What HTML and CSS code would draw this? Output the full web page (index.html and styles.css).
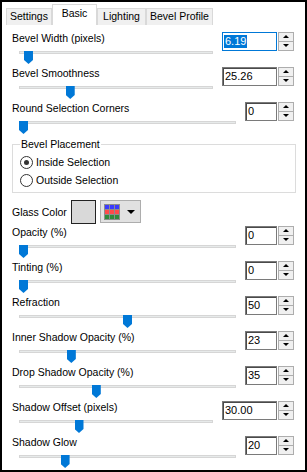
FILE: index.html
```html
<!DOCTYPE html>
<html>
<head>
<meta charset="UTF-8">
<title>Glass Bevel</title>
<link rel="stylesheet" href="styles.css">
</head>
<body>
<div class="frame">
	<div class="tabs">
		<span class="tab tab-settings">Settings</span>
		<span class="tab tab-basic active">Basic</span>
		<span class="tab tab-lighting">Lighting</span>
		<span class="tab tab-profile">Bevel Profile</span>
	</div>

	<div class="page">
		<div class="row">
			<div class="control">
				<div class="label">Bevel Width (pixels)</div>
				<div class="slider" style="--v:0.027"><div class="track"></div><span class="thumb"></span></div>
			</div>
			<div class="spin wide focus">
				<div class="field"><span class="sel">6.19</span></div>
				<div class="arrows"><span class="up"></span><span class="down"></span></div>
			</div>
		</div>

		<div class="row">
			<div class="control">
				<div class="label">Bevel Smoothness</div>
				<div class="slider" style="--v:0.2526"><div class="track"></div><span class="thumb"></span></div>
			</div>
			<div class="spin wide">
				<div class="field">25.26</div>
				<div class="arrows"><span class="up"></span><span class="down"></span></div>
			</div>
		</div>

		<div class="row">
			<div class="control">
				<div class="label">Round Selection Corners</div>
				<div class="slider" style="--v:0"><div class="track"></div><span class="thumb"></span></div>
			</div>
			<div class="spin">
				<div class="field">0</div>
				<div class="arrows"><span class="up"></span><span class="down"></span></div>
			</div>
		</div>

		<fieldset class="group">
			<legend>Bevel Placement</legend>
			<div class="radio"><span class="dot on"></span>Inside Selection</div>
			<div class="radio"><span class="dot"></span>Outside Selection</div>
		</fieldset>

		<div class="glass">
			<span>Glass Color</span>
			<span class="swatch"></span>
			<span class="picker">
				<svg width="16" height="16" viewBox="0 0 16 16">
					<rect x="0" y="0" width="16" height="16" fill="#8c8c8c"/>
					<rect x="1" y="1" width="4" height="4" fill="#3a3aff"/>
					<rect x="6" y="1" width="4" height="4" fill="#3a3aff"/>
					<rect x="11" y="1" width="4" height="4" fill="#3a3aff"/>
					<rect x="1" y="6" width="4" height="4" fill="#ff4a4a"/>
					<rect x="6" y="6" width="4" height="4" fill="#ff4a4a"/>
					<rect x="11" y="6" width="4" height="4" fill="#ff4a4a"/>
					<rect x="1" y="11" width="4" height="4" fill="#2e8b3a"/>
					<rect x="6" y="11" width="4" height="4" fill="#2e8b3a"/>
					<rect x="11" y="11" width="4" height="4" fill="#2e8b3a"/>
				</svg>
				<span class="caret"></span>
			</span>
		</div>

		<div class="row">
			<div class="control">
				<div class="label">Opacity (%)</div>
				<div class="slider" style="--v:0"><div class="track"></div><span class="thumb"></span></div>
			</div>
			<div class="spin">
				<div class="field">0</div>
				<div class="arrows"><span class="up"></span><span class="down"></span></div>
			</div>
		</div>

		<div class="row">
			<div class="control">
				<div class="label">Tinting (%)</div>
				<div class="slider" style="--v:0"><div class="track"></div><span class="thumb"></span></div>
			</div>
			<div class="spin">
				<div class="field">0</div>
				<div class="arrows"><span class="up"></span><span class="down"></span></div>
			</div>
		</div>

		<div class="row">
			<div class="control">
				<div class="label">Refraction</div>
				<div class="slider" style="--v:0.50"><div class="track"></div><span class="thumb"></span></div>
			</div>
			<div class="spin">
				<div class="field">50</div>
				<div class="arrows"><span class="up"></span><span class="down"></span></div>
			</div>
		</div>

		<div class="row">
			<div class="control">
				<div class="label">Inner Shadow Opacity (%)</div>
				<div class="slider" style="--v:0.23"><div class="track"></div><span class="thumb"></span></div>
			</div>
			<div class="spin">
				<div class="field">23</div>
				<div class="arrows"><span class="up"></span><span class="down"></span></div>
			</div>
		</div>

		<div class="row">
			<div class="control">
				<div class="label">Drop Shadow Opacity (%)</div>
				<div class="slider" style="--v:0.35"><div class="track"></div><span class="thumb"></span></div>
			</div>
			<div class="spin">
				<div class="field">35</div>
				<div class="arrows"><span class="up"></span><span class="down"></span></div>
			</div>
		</div>

		<div class="row">
			<div class="control">
				<div class="label">Shadow Offset (pixels)</div>
				<div class="slider" style="--v:0.30"><div class="track"></div><span class="thumb"></span></div>
			</div>
			<div class="spin wide">
				<div class="field">30.00</div>
				<div class="arrows"><span class="up"></span><span class="down"></span></div>
			</div>
		</div>

		<div class="row last">
			<div class="control">
				<div class="label">Shadow Glow</div>
				<div class="slider" style="--v:0.20"><div class="track"></div><span class="thumb"></span></div>
			</div>
			<div class="spin">
				<div class="field">20</div>
				<div class="arrows"><span class="up"></span><span class="down"></span></div>
			</div>
		</div>
	</div>
</div>
</body>
</html>
```

FILE: styles.css
```css
* {
	margin: 0;
	padding: 0;
	box-sizing: border-box;
}

body {
	font-family: "Liberation Sans", Arial, sans-serif;
	font-size: 10.5px;
	color: #000;
	background: #fff;
}

.frame {
	width: 307px;
	height: 472px;
	border: 2px solid #000;
	background: #fff;
	overflow: hidden;
}

/* tab strip */
.tabs {
	display: flex;
	align-items: flex-end;
	height: 23px;
	padding-left: 4px;
}

.tab {
	height: 17px;
	border: 1px solid #d9d9d9;
	border-bottom: none;
	background: #f0f0f0;
	line-height: 14px;
	text-align: center;
	white-space: nowrap;
}

.tab-settings { width: 46px; }
.tab-basic { width: 45px; }
.tab-lighting { width: 49px; }
.tab-profile { width: 67px; }

.tab.active {
	height: 21px;
	background: #fff;
	line-height: 16px;
}

.page {
	padding: 7px 11px 0 10px;
}

/* slider rows */
.row {
	display: flex;
	align-items: flex-start;
	height: 35px;
}

.row.last {
	height: 34px;
}

.control {
	flex: 1;
	margin-right: 9px;
}

.label {
	height: 13px;
	line-height: 13px;
	white-space: nowrap;
}

.slider {
	position: relative;
	height: 14px;
	margin: 1px 0 0 7px;
}

.track {
	height: 3px;
	margin-top: 6px;
	background: #e7eaea;
	border: 1px solid #d6d6d6;
}

.thumb {
	position: absolute;
	top: 0;
	left: calc(var(--v) * (100% - 9px));
	width: 9px;
	height: 13px;
	background: #0078d7;
	clip-path: polygon(0 0, 100% 0, 100% 70%, 50% 100%, 0 70%);
}

/* spin boxes */
.spin {
	display: flex;
	height: 19px;
}

.field {
	width: 32px;
	height: 19px;
	border: 1px solid #7a7a7a;
	box-shadow: inset 1px 1px 0 #4a4a4a;
	padding: 2px 0 0 2px;
	line-height: 13px;
	font-size: 11px;
	background: #fff;
	white-space: nowrap;
}

.spin.wide .field {
	width: 55px;
}

.focus .field {
	border-color: #0078d7;
	box-shadow: none;
	padding-left: 1px;
}

.sel {
	display: inline-block;
	padding: 0 1px;
	background: #0078d7;
	color: #fff;
}

.arrows {
	display: flex;
	flex-direction: column;
	width: 16px;
	margin-left: 1px;
}

.arrows span {
	position: relative;
	flex: 1;
	border: 1px solid #adadad;
	background: #f0f0f0;
}

.arrows .down {
	border-top: none;
}

.arrows span::after {
	content: "";
	position: absolute;
	left: 4px;
	top: 2px;
	border-left: 3px solid transparent;
	border-right: 3px solid transparent;
}

.arrows .up::after {
	border-bottom: 3px solid #000;
}

.arrows .down::after {
	top: 2px;
	border-top: 3px solid #000;
}

/* group box */
.group {
	margin: 1px -2px 0 0;
	border: 1px solid #dcdcdc;
	padding: 2px 0 3px 7px;
}

.group legend {
	padding: 0 1px;
	line-height: 13px;
}

.radio {
	display: flex;
	align-items: center;
	height: 18px;
}

.dot {
	position: relative;
	width: 13px;
	height: 13px;
	margin-right: 3px;
	border: 1px solid #333;
	border-radius: 50%;
	background: #fff;
}

.dot.on::after {
	content: "";
	position: absolute;
	left: 3px;
	top: 3px;
	width: 5px;
	height: 5px;
	border-radius: 50%;
	background: #333;
}

/* glass colour */
.glass {
	display: flex;
	align-items: center;
	height: 24px;
	margin: 7px 0 2px;
}

.swatch {
	width: 25px;
	height: 24px;
	margin-left: 4px;
	border: 1px solid #222;
	background: #d9d9d9;
}

.picker {
	display: flex;
	align-items: center;
	align-self: flex-start;
	width: 41px;
	height: 23px;
	margin-left: 4px;
	padding-left: 3px;
	border: 1px solid #adadad;
	background: #e1e1e1;
}

.caret {
	margin-left: 7px;
	border-left: 4px solid transparent;
	border-right: 4px solid transparent;
	border-top: 4px solid #000;
}
```
